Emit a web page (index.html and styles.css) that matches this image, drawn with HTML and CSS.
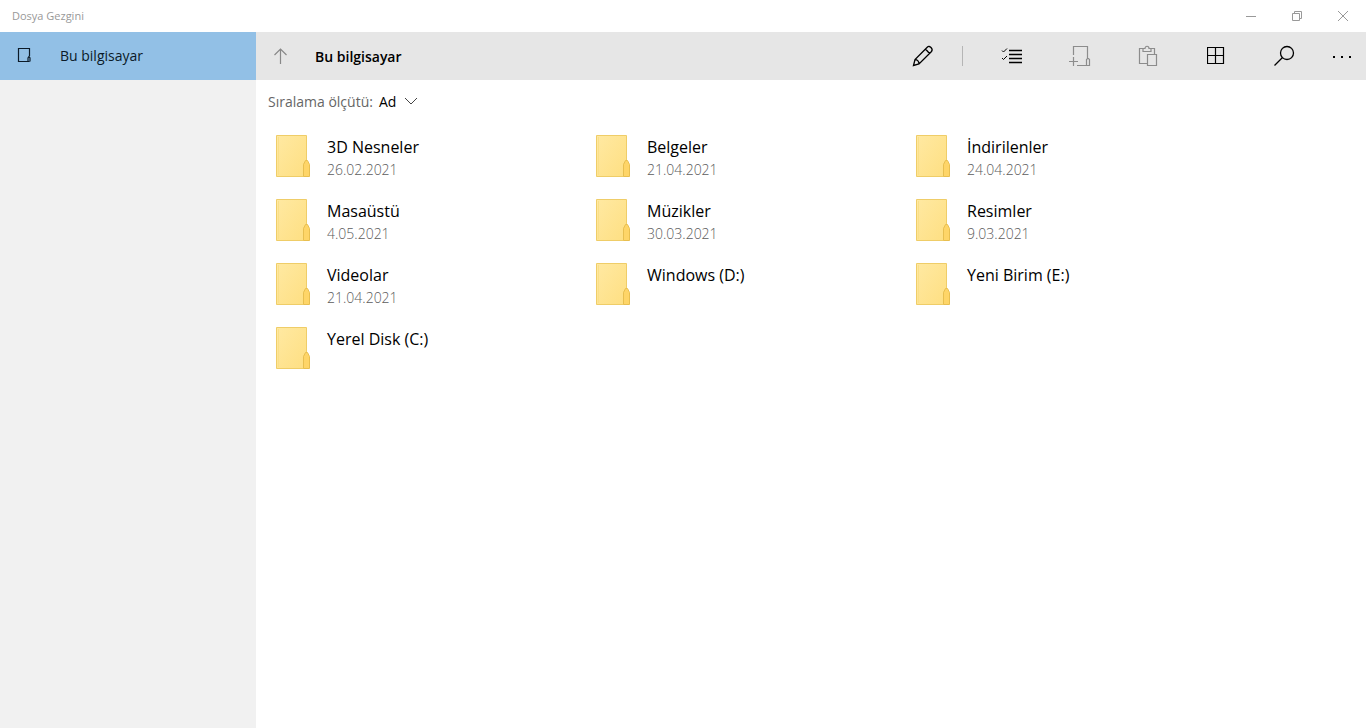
FILE: index.html
```html
<!DOCTYPE html>
<html lang="tr">
<head>
<meta charset="utf-8">
<title>Dosya Gezgini</title>
<link rel="stylesheet" href="styles.css">
</head>
<body>
<svg class="defs" aria-hidden="true">
  <defs>
    <linearGradient id="folder-fill" x1="0" y1="0" x2="1" y2="1">
      <stop offset="0" stop-color="#ffe9a2"/>
      <stop offset="1" stop-color="#fedf82"/>
    </linearGradient>
    <symbol id="folder" viewBox="0 0 34 42">
      <path d="M.5 .5H30.500V26L27.500 29.500V41.500H.5Z" fill="url(#folder-fill)" stroke="#efcd68"/>
      <path d="M2.500 2V40" stroke="#fadf88" fill="none"/>
      <path d="M27.500 41.500V29.500L29.500 25.500H31.500L33.500 29.500V41.500Z" fill="#fed568" stroke="#e8bf50"/>
    </symbol>
  </defs>
</svg>
<div class="window">
  <header class="titlebar">
    <h1 class="app-title">Dosya Gezgini</h1>
    <div class="window-controls">
      <button class="window-button" type="button" aria-label="Simge durumuna küçült"><svg width="12" height="12" viewBox="0 0 12 12"><path d="M1 6.500H11"/></svg></button>
      <button class="window-button" type="button" aria-label="Önceki boyut"><svg width="12" height="12" viewBox="0 0 12 12"><path d="M1.500 3.500H8.500V10.500H1.500ZM3.500 3V1.500H10.500V8.500H9"/></svg></button>
      <button class="window-button" type="button" aria-label="Kapat"><svg width="12" height="12" viewBox="0 0 12 12"><path d="M1 1L11 11M11 1L1 11"/></svg></button>
    </div>
  </header>
  <div class="body">
    <nav class="sidebar">
      <a class="nav-item" href="#">
        <svg width="16" height="16" viewBox="0 0 16 16"><path d="M13.500 9V1.500H2.500V14.500H13.500M12 14V11L13 9.500L14 11V14.500" stroke-width="1.200"/></svg>
        <span>Bu bilgisayar</span>
      </a>
    </nav>
    <main class="content">
      <div class="toolbar">
        <button class="up-button" type="button" aria-label="Yukarı"><svg width="16" height="16" viewBox="0 0 16 16"><path d="M8.500 16V1M2.500 7L8.500 1L14.500 7" stroke-width="1.200"/></svg></button>
        <h2 class="location">Bu bilgisayar</h2>
        <button class="tool" type="button" aria-label="Yeniden adlandır"><svg width="22" height="22" viewBox="0 0 22 22"><path d="M1.500 20.500L3 14.500L15.500 2C17.500 0 21.500 4 19.500 6.500L7 19ZM3 14.500C5.500 14.500 7 16.500 7 19M13.500 4L17.500 8.500" stroke-width="1.300"/></svg></button>
        <span class="divider"></span>
        <button class="tool" type="button" aria-label="Seç"><svg width="22" height="18" viewBox="0 0 22 18"><path d="M8 3.500H21M8 7.500H21M8 11.500H21M8 15.500H21" stroke-width="1.300"/><path d="M1 3.500L2.500 5L6 1.500M1 11L2.500 12.500L6 9"/></svg></button>
        <button class="tool" type="button" aria-label="Yeni klasör" disabled><svg width="22" height="22" viewBox="0 0 22 22"><path d="M4.500 10V1.500H18.500V13.500M8 20.500H20.500V14.500L19.500 13.500H18.500L17.500 14.500V20.500M4.500 12V21M0 16.500H9" stroke-width="1.200"/></svg></button>
        <button class="tool" type="button" aria-label="Yapıştır" disabled><svg width="20" height="22" viewBox="0 0 20 22"><path d="M9 18.500H1.500V3.500H5M13 3.500H16.500V9M5 6.500V3.500H7C7 .5 11 .5 11 3.500H13V6.500ZM9.500 9.500H18.500V20.500H9.500Z" stroke-width="1.200"/></svg></button>
        <button class="tool" type="button" aria-label="Görünüm"><svg width="18" height="18" viewBox="0 0 18 18"><path d="M.5 .5H16.500V16.500H.5ZM8.500 1V16M1 8.500H16" stroke-width="1.200"/></svg></button>
        <button class="tool" type="button" aria-label="Ara"><svg width="22" height="22" viewBox="0 0 22 22"><circle cx="14" cy="8" r="6.500" stroke-width="1.300"/><path d="M9.500 12.500L1.500 20.500" stroke-width="1.300"/></svg></button>
        <button class="tool more" type="button" aria-label="Diğer"><svg width="20" height="6" viewBox="0 0 20 6"><path d="M1 3H3V5H1ZM9 3H11V5H9ZM17 3H19V5H17Z" fill="currentColor" stroke="none"/></svg></button>
      </div>
      <button class="sort" type="button">
        <span class="sort-label">Sıralama ölçütü:</span>
        <span>Ad</span>
        <svg width="14" height="8" viewBox="0 0 14 8"><path d="M1 1L7 7L13 1"/></svg>
      </button>
      <ul class="files">
        <li class="file"><svg class="folder"><use href="#folder"/></svg><div><div class="name">3D Nesneler</div><div class="date">26.02.2021</div></div></li>
        <li class="file"><svg class="folder"><use href="#folder"/></svg><div><div class="name">Belgeler</div><div class="date">21.04.2021</div></div></li>
        <li class="file"><svg class="folder"><use href="#folder"/></svg><div><div class="name">İndirilenler</div><div class="date">24.04.2021</div></div></li>
        <li class="file"><svg class="folder"><use href="#folder"/></svg><div><div class="name">Masaüstü</div><div class="date">4.05.2021</div></div></li>
        <li class="file"><svg class="folder"><use href="#folder"/></svg><div><div class="name">Müzikler</div><div class="date">30.03.2021</div></div></li>
        <li class="file"><svg class="folder"><use href="#folder"/></svg><div><div class="name">Resimler</div><div class="date">9.03.2021</div></div></li>
        <li class="file"><svg class="folder"><use href="#folder"/></svg><div><div class="name">Videolar</div><div class="date">21.04.2021</div></div></li>
        <li class="file"><svg class="folder"><use href="#folder"/></svg><div><div class="name">Windows (D:)</div></div></li>
        <li class="file"><svg class="folder"><use href="#folder"/></svg><div><div class="name">Yeni Birim (E:)</div></div></li>
        <li class="file"><svg class="folder"><use href="#folder"/></svg><div><div class="name">Yerel Disk (C:)</div></div></li>
      </ul>
    </main>
  </div>
</div>
</body>
</html>
```
FILE: styles.css
```css
* {
  box-sizing: border-box;
}

body {
  margin: 0;
  background: #fff;
  color: #000;
  font-family: "Open Sans", "Noto Sans", sans-serif;
  font-size: 14px;
}

button {
  margin: 0;
  padding: 0;
  border: 0;
  background: none;
  color: inherit;
  font: inherit;
}

svg {
  flex: none;
  fill: none;
  stroke: currentColor;
}

.defs {
  position: absolute;
  width: 0;
  height: 0;
}

.window {
  display: flex;
  flex-direction: column;
  min-height: 100vh;
}

.titlebar {
  display: flex;
  align-items: center;
  justify-content: space-between;
  height: 32px;
  padding-left: 12px;
  color: #999;
}

.app-title {
  margin: 0;
  padding-bottom: 2px;
  font-size: 11px;
  font-weight: 400;
}

.window-controls {
  display: flex;
}

.window-button {
  display: flex;
  align-items: center;
  justify-content: center;
  width: 46px;
  height: 32px;
}

.body {
  display: flex;
  flex: 1;
}

.sidebar {
  flex: none;
  width: 256px;
  background: #f1f1f1;
}

.nav-item {
  display: flex;
  align-items: center;
  gap: 28px;
  height: 48px;
  padding: 0 0 2px 16px;
  background: #92c0e6;
  color: #0b1a28;
  text-decoration: none;
}

.content {
  flex: 1;
  min-width: 0;
}

.toolbar {
  display: flex;
  align-items: center;
  height: 48px;
  background: #e6e6e6;
}

.up-button {
  display: flex;
  align-items: center;
  justify-content: center;
  width: 48px;
  height: 48px;
  color: #888;
}

.location {
  flex: 1;
  margin: 0;
  padding-left: 11px;
  font-size: 14px;
  font-weight: 600;
}

.tool {
  display: flex;
  align-items: center;
  justify-content: center;
  width: 68px;
  height: 48px;
}

.tool:disabled {
  color: #8c8c8c;
}

.more {
  width: 48px;
}

.divider {
  width: 16px;
  height: 20px;
  margin-left: 5px;
  border-left: 1px solid #b5b5b5;
}

.sort {
  display: flex;
  align-items: center;
  gap: 6px;
  height: 44px;
  padding: 0 0 2px 12px;
}

.sort svg {
  margin-left: 2px;
  color: #444;
}

.sort-label {
  color: #666;
}

.files {
  display: grid;
  grid-template-columns: repeat(auto-fill, 320px);
  margin: 0;
  padding: 0 12px;
  list-style: none;
}

.file {
  display: flex;
  gap: 17px;
  height: 64px;
  padding: 11px 8px 0;
}

.folder {
  width: 34px;
  height: 42px;
}

.name {
  font-size: 16px;
  line-height: 24px;
}

.date {
  color: #5c5c5c;
  font-size: 14px;
  font-weight: 300;
  line-height: 22px;
}
```
